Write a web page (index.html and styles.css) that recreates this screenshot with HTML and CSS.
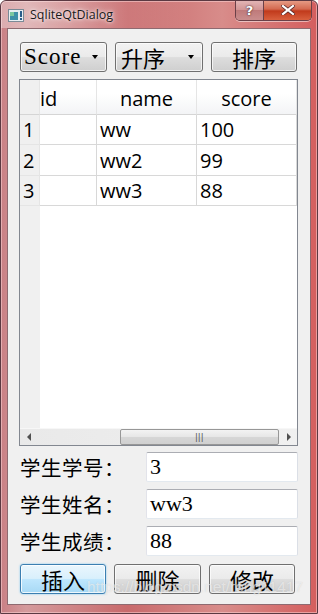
FILE: index.html
```html
<!DOCTYPE html>
<html>

<head>
    <link rel="stylesheet" href="styles.css">
</head>

<body>
    <div class="window">
        <div class="titlebar">
            <svg class="app-icon" width="17" height="13" viewBox="0 0 17 13">
                <rect x="0.5" y="0.5" width="15" height="12" fill="#e8eef2" stroke="#7b8a96"/>
                <rect x="2" y="3" width="8" height="8" fill="#3f8fa8"/>
                <rect x="2" y="3" width="4" height="4" fill="#7cc7a0"/>
                <rect x="12" y="2" width="2" height="6" fill="#2a5d8a"/>
                <rect x="12" y="9" width="2" height="2" fill="#2a5d8a"/>
            </svg>
            <span class="title">SqliteQtDialog</span>
            <div class="caption-btns">
                <div class="cap-btn help">?</div>
                <div class="cap-btn close">
                    <svg width="14" height="10" viewBox="0 0 14 10">
                        <path d="M2 1 L12 9 M12 1 L2 9" stroke="#5a2a2a" stroke-width="3.6" stroke-linecap="square"/>
                        <path d="M2 1 L12 9 M12 1 L2 9" stroke="#fff" stroke-width="2.2" stroke-linecap="square"/>
                    </svg>
                </div>
            </div>
        </div>

        <div class="client">
            <div class="toolbar">
                <div class="combo w87"><span>Score</span><i class="arrow"></i></div>
                <div class="combo w88"><span class="cjk">升序</span><i class="arrow"></i></div>
                <div class="pushbtn w86">排序</div>
            </div>

            <div class="table">
                <div class="grid">
                    <div class="hcell corner"></div>
                    <div class="hcell hid">id</div>
                    <div class="hcell">name</div>
                    <div class="hcell">score</div>

                    <div class="vcell">1</div>
                    <div class="cell"></div>
                    <div class="cell">ww</div>
                    <div class="cell">100</div>

                    <div class="vcell">2</div>
                    <div class="cell"></div>
                    <div class="cell">ww2</div>
                    <div class="cell">99</div>

                    <div class="vcell">3</div>
                    <div class="cell"></div>
                    <div class="cell">ww3</div>
                    <div class="cell">88</div>
                </div>
                <div class="table-rest">
                    <div class="rest-side"></div>
                </div>
                <div class="hscroll">
                    <div class="sarrow left"></div>
                    <div class="track">
                        <div class="handle"><span class="grip">|||</span></div>
                    </div>
                    <div class="sarrow right"></div>
                </div>
            </div>

            <div class="form">
                <div class="form-row">
                    <span class="label">学生学号：</span>
                    <div class="input">3</div>
                </div>
                <div class="form-row">
                    <span class="label">学生姓名：</span>
                    <div class="input">ww3</div>
                </div>
                <div class="form-row">
                    <span class="label">学生成绩：</span>
                    <div class="input">88</div>
                </div>
            </div>

            <div class="actions">
                <div class="pushbtn w86 default">插入</div>
                <div class="pushbtn w87">删除</div>
                <div class="pushbtn w86">修改</div>
            </div>
        </div>
        <div class="watermark">https://blog.csdn.net/rong11417</div>
    </div>
</body>

</html>
```

FILE: styles.css
```css
* {
    box-sizing: border-box;
}

body {
    margin: 0;
    width: 318px;
    height: 614px;
    overflow: hidden;
    background: #ffffff;
}

.window {
    position: relative;
    width: 318px;
    height: 614px;
    overflow: hidden;
    display: flex;
    flex-direction: column;
    border: 1px solid #5b3942;
    border-radius: 6px 6px 0 0;
    background: linear-gradient(90deg, #c98085 0%, #d49a9c 8%, #c86a6c 40%, #d88c8a 70%, #d45e5e 100%);
    box-shadow: inset 0 0 0 1px rgba(255, 220, 220, 0.5);
}

.titlebar {
    height: 27px;
    display: flex;
    align-items: flex-start;
    padding-left: 7px;
    background: linear-gradient(90deg, rgba(255, 255, 255, 0.35) 0%, rgba(255, 255, 255, 0.15) 30%, rgba(0, 0, 0, 0) 60%);
}

.app-icon {
    margin-top: 8px;
}

.title {
    margin-left: 5px;
    margin-top: 5px;
    font-family: "Open Sans", "Liberation Sans", sans-serif;
    font-size: 12.5px;
    color: #1a1a1a;
    text-shadow: 0 0 6px rgba(255, 255, 255, 0.9), 0 0 3px rgba(255, 255, 255, 0.9);
}

.caption-btns {
    margin-left: auto;
    margin-right: 5px;
    margin-top: -1px;
    display: flex;
    border: 1px solid #6b4048;
    border-top: none;
    border-radius: 0 0 5px 5px;
    overflow: hidden;
    box-shadow: 0 1px 0 rgba(255, 255, 255, 0.5);
}

.cap-btn {
    height: 20px;
    display: flex;
    align-items: center;
    justify-content: center;
}

.help {
    width: 28px;
    border-right: 1px solid #6b4048;
    background: linear-gradient(#e4b8b8 0%, #d19494 50%, #bf7a7a 51%, #c98d8d 100%);
    font-family: "DejaVu Sans", sans-serif;
    font-weight: bold;
    font-size: 13px;
    color: #fff;
    text-shadow: 0 0 2px #4a2a30, 0 0 1px #4a2a30;
}

.close {
    width: 47px;
    background: linear-gradient(#e8a08a 0%, #d46a50 45%, #c13a1c 55%, #d8603e 100%);
}

.client {
    flex: 1;
    margin: 0 6px 8px 6px;
    border: 1px solid #8e6a70;
    background: #f0f0f0;
    padding: 13px 12px 0 11px;
    display: flex;
    flex-direction: column;
}

.toolbar,
.actions {
    display: flex;
    gap: 8px;
    margin-left: 1px;
    height: 30px;
}

.actions {
    margin-top: 8px;
}

.w86 {
    width: 86px;
}

.w87 {
    width: 87px;
}

.w88 {
    width: 88px;
}

.combo,
.pushbtn {
    height: 30px;
    border: 1px solid #707070;
    border-radius: 3px;
    background: linear-gradient(#f2f2f2 0%, #ebebeb 48%, #dddddd 52%, #cfcfcf 100%);
    box-shadow: inset 0 0 0 1px rgba(255, 255, 255, 0.7);
    display: flex;
    align-items: center;
    color: #000;
}

.combo {
    padding: 0 8px 0 3px;
    font-family: "Liberation Serif", "Noto Sans CJK SC", serif;
    font-size: 23px;
    letter-spacing: 1px;
}

.combo .cjk {
    font-family: "Noto Sans CJK SC", sans-serif;
    font-size: 22px;
    letter-spacing: 0;
    margin-left: 2px;
}

.arrow {
    margin-left: auto;
    width: 0;
    height: 0;
    border-left: 3.5px solid transparent;
    border-right: 3.5px solid transparent;
    border-top: 4px solid #000;
}

.pushbtn {
    justify-content: center;
    font-family: "Noto Sans CJK SC", sans-serif;
    font-size: 22px;
}

.pushbtn.default {
    border-color: #3c7fb1;
    background: linear-gradient(#eaf6fd 0%, #d9f0fc 48%, #bee6fd 52%, #a7d9f5 100%);
    box-shadow: inset 0 0 0 1px rgba(255, 255, 255, 0.8), 0 0 2px #6fc3f0;
}

.table {
    margin-top: 7px;
    height: 367px;
    border: 1px solid #828790;
    background: #ffffff;
    display: flex;
    flex-direction: column;
}

.grid {
    display: grid;
    grid-template-columns: 20px 57px 100px 100px;
    grid-template-rows: 35px 30px 31px 30px;
    font-family: "Open Sans", "Liberation Sans", sans-serif;
    font-size: 20px;
    color: #000;
}

.hcell {
    background: linear-gradient(#ffffff 0%, #ffffff 40%, #f3f4f6 100%);
    border-right: 1px solid #e5e5e5;
    border-bottom: 1px solid #d5d5d5;
    display: flex;
    align-items: center;
    justify-content: center;
    padding-top: 2px;
}

.hcell.corner {
    background: #f0f0f0;
}

.hcell.hid {
    justify-content: flex-start;
    padding-left: 0;
}

.vcell {
    background: #f0f0f0;
    border-right: 1px solid #e5e5e5;
    border-bottom: 1px solid #e5e5e5;
    display: flex;
    align-items: center;
    padding-left: 3px;
}

.cell {
    border-right: 1px solid #d8d8d8;
    border-bottom: 1px solid #d8d8d8;
    display: flex;
    align-items: center;
    padding-left: 3px;
}

.table-rest {
    flex: 1;
    display: flex;
}

.rest-side {
    width: 20px;
    background: #f0f0f0;
}

.hscroll {
    height: 17px;
    display: flex;
    align-items: stretch;
    background: linear-gradient(90deg, #e9e9e9, #f0f0f0);
    border-top: 1px solid #f7f7f7;
}

.sarrow {
    width: 17px;
    display: flex;
    align-items: center;
    justify-content: center;
}

.sarrow::before {
    content: "";
    width: 0;
    height: 0;
    border-top: 4px solid transparent;
    border-bottom: 4px solid transparent;
}

.sarrow.left::before {
    border-right: 4px solid #505050;
}

.sarrow.right::before {
    border-left: 4px solid #505050;
}

.track {
    flex: 1;
    display: flex;
    padding-left: 83px;
    padding-right: 1px;
}

.handle {
    width: 159px;
    height: 16px;
    border: 1px solid #979797;
    border-radius: 2px;
    background: linear-gradient(#f3f3f3 0%, #e6e6e6 50%, #d6d6d6 51%, #d0d0d0 100%);
    display: flex;
    align-items: center;
    justify-content: center;
}

.grip {
    font-family: "Liberation Sans", sans-serif;
    font-size: 9px;
    letter-spacing: 0.5px;
    color: #555;
}

.form {
    margin-top: 6px;
    display: flex;
    flex-direction: column;
    gap: 7px;
}

.form-row {
    display: flex;
    align-items: center;
    height: 30px;
}

.label {
    width: 126px;
    margin-left: 1px;
    font-family: "Noto Sans CJK SC", sans-serif;
    font-size: 20.5px;
    letter-spacing: 0.5px;
    color: #000;
}

.input {
    margin-left: auto;
    width: 152px;
    height: 30px;
    background: #fff;
    border: 1px solid #abadb3;
    border-color: #abadb3 #dbdfe6 #e3e9ef #e2e3ea;
    border-radius: 2px;
    padding-left: 3px;
    display: flex;
    align-items: center;
    font-family: "Liberation Serif", serif;
    font-size: 22px;
    color: #000;
}

.watermark {
    position: absolute;
    left: 86px;
    top: 577px;
    font-family: "Liberation Sans", sans-serif;
    font-size: 15.5px;
    color: rgba(255, 255, 255, 0.55);
    text-shadow: 0 0 1px rgba(150, 150, 150, 0.35);
    white-space: nowrap;
    pointer-events: none;
}
```
